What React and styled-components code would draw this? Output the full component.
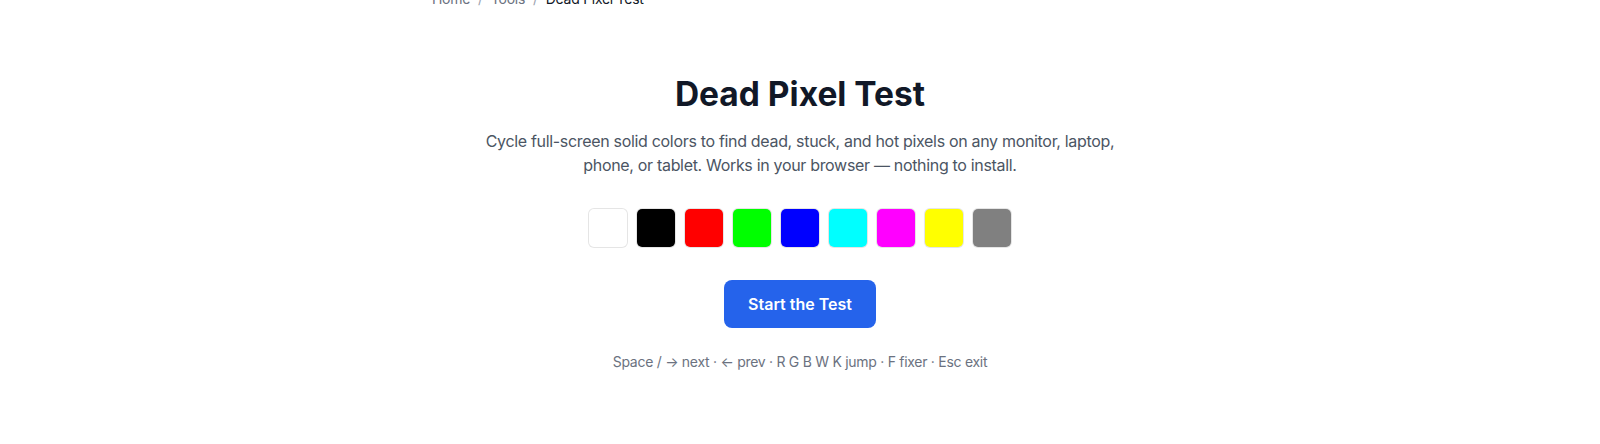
import React from 'react';
import styled, { createGlobalStyle } from 'styled-components';

const GlobalStyle = createGlobalStyle`
    html, body {
        margin: 0;
        padding: 0;
        background: #ffffff;
        font-family: Inter, "Noto Sans", "Liberation Sans", sans-serif;
        -webkit-font-smoothing: antialiased;
    }
`;

const StyledPage = styled.main`
    max-width: 768px;
    margin: 0 auto;
    padding: 0 16px;
    box-sizing: border-box;
`;

const StyledCrumbs = styled.nav`
    display: flex;
    align-items: center;
    gap: 8px;
    margin-top: -11px;
    font-size: 14px;
    line-height: 20px;
    letter-spacing: -0.02em;
    color: #6b7280;
`;

const StyledCrumb = styled.span`
    color: ${({ $current }) => ($current ? '#111827' : '#6b7280')};
`;

const StyledSep = styled.span`
    color: #9ca3af;
`;

const StyledHero = styled.section`
    display: flex;
    flex-direction: column;
    align-items: center;
    text-align: center;
    margin-top: 67px;
`;

const StyledH1 = styled.h1`
    margin: 0;
    font-size: 33.5px;
    line-height: 36px;
    font-weight: 700;
    color: #111827;
`;

const StyledLead = styled.p`
    margin: 17px 0 0;
    max-width: 672px;
    font-size: 16px;
    line-height: 24px;
    letter-spacing: -0.02em;
    color: #4b5563;
`;

const StyledSwatches = styled.div`
    display: flex;
    gap: 8px;
    margin-top: 31px;
`;

const StyledSwatch = styled.button`
    width: 40px;
    height: 40px;
    padding: 0;
    border: 1px solid rgba(0, 0, 0, 0.1);
    border-radius: 6px;
    background-color: ${({ $color }) => $color};
    background-clip: padding-box;
    cursor: pointer;
`;

const StyledButton = styled.button`
    margin-top: 32px;
    height: 48px;
    padding: 0 24px;
    border: none;
    border-radius: 8px;
    background-color: #2563eb;
    color: #ffffff;
    font-family: inherit;
    font-size: 16px;
    font-weight: 600;
    cursor: pointer;
`;

const StyledHint = styled.p`
    margin: 24px 0 0;
    font-size: 14px;
    line-height: 20px;
    letter-spacing: -0.02em;
    color: #6b7280;
`;

const colors = ['#ffffff', '#000000', '#ff0000', '#00ff00', '#0000ff', '#00ffff', '#ff00ff', '#ffff00', '#808080'];

export default function App() {
    return (
        <>
            <GlobalStyle />
            <StyledPage>
                <StyledCrumbs>
                    <StyledCrumb>Home</StyledCrumb>
                    <StyledSep>/</StyledSep>
                    <StyledCrumb>Tools</StyledCrumb>
                    <StyledSep>/</StyledSep>
                    <StyledCrumb $current>Dead Pixel Test</StyledCrumb>
                </StyledCrumbs>
                <StyledHero>
                    <StyledH1>Dead Pixel Test</StyledH1>
                    <StyledLead>
                        Cycle full-screen solid colors to find dead, stuck, and hot pixels on any monitor, laptop,
                        phone, or tablet. Works in your browser — nothing to install.
                    </StyledLead>
                    <StyledSwatches>
                        {colors.map((c) => <StyledSwatch key={c} $color={c} aria-label={c} />)}
                    </StyledSwatches>
                    <StyledButton>Start the Test</StyledButton>
                    <StyledHint>Space / → next · ← prev · R G B W K jump · F fixer · Esc exit</StyledHint>
                </StyledHero>
            </StyledPage>
        </>
    );
}
